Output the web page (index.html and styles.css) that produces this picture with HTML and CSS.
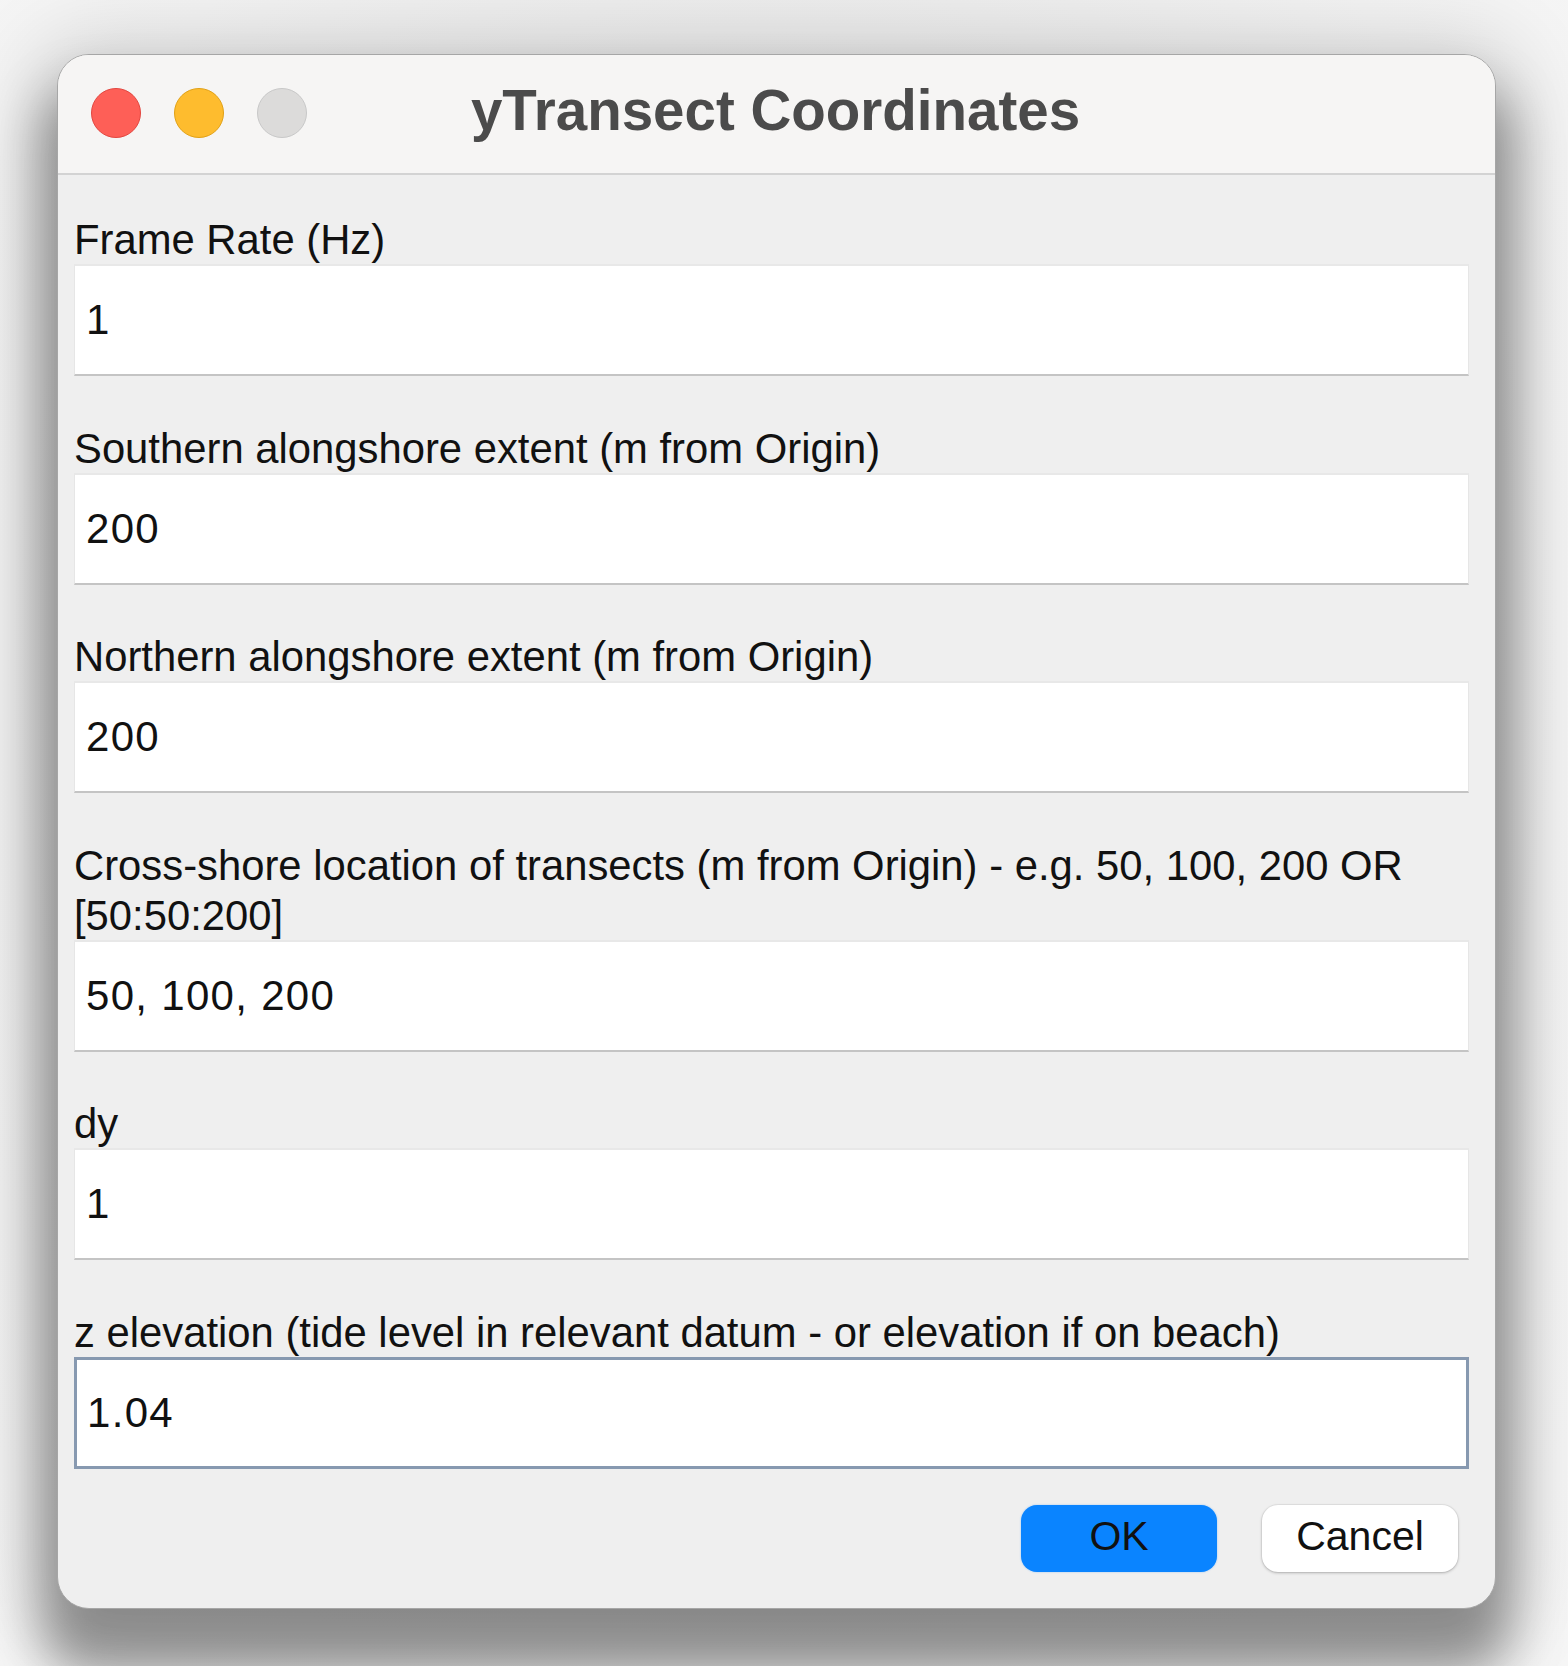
FILE: index.html
```html
<!DOCTYPE html>
<html lang="en">
<head>
<meta charset="utf-8">
<title>yTransect Coordinates</title>
<link rel="stylesheet" href="styles.css">
</head>
<body>
<div class="window">
  <div class="titlebar">
    <div class="lights">
      <span class="light red"></span>
      <span class="light yellow"></span>
      <span class="light gray"></span>
    </div>
    <div class="title">yTransect Coordinates</div>
  </div>
  <div class="content">
    <div class="field">
      <label class="label">Frame Rate (Hz)</label>
      <input class="input" type="text" value="1">
    </div>
    <div class="field">
      <label class="label">Southern alongshore extent (m from Origin)</label>
      <input class="input" type="text" value="200">
    </div>
    <div class="field">
      <label class="label">Northern alongshore extent (m from Origin)</label>
      <input class="input" type="text" value="200">
    </div>
    <div class="field">
      <label class="label">Cross-shore location of transects (m from Origin) - e.g. 50, 100, 200 OR [50:50:200]</label>
      <input class="input" type="text" value="50, 100, 200">
    </div>
    <div class="field">
      <label class="label">dy</label>
      <input class="input" type="text" value="1">
    </div>
    <div class="field">
      <label class="label">z elevation (tide level in relevant datum - or elevation if on beach)</label>
      <input class="input focused" type="text" value="1.04">
    </div>
    <div class="actions">
      <button class="btn primary">OK</button>
      <button class="btn secondary">Cancel</button>
    </div>
  </div>
</div>
</body>
</html>
```

FILE: styles.css
```css
* { box-sizing: border-box; }

html, body {
  margin: 0;
  height: 100%;
}

body {
  background: radial-gradient(ellipse at 50% 40%, #e2e2e2 0%, #f3f3f3 70%, #f6f6f6 100%);
  padding: 54px 0 0 57px;
  font-family: "Liberation Sans", Arial, Helvetica, sans-serif;
  overflow: hidden;
}

.window {
  width: 1439px;
  height: 1555px;
  border: 1px solid #a6a6a6;
  border-radius: 32px;
  background: #efefef;
  overflow: hidden;
  display: flex;
  flex-direction: column;
  box-shadow: 0 50px 50px 16px rgba(0, 0, 0, 0.36), 0 10px 80px 22px rgba(0, 0, 0, 0.15);
}

.titlebar {
  height: 120px;
  flex: none;
  background: #f6f5f4;
  border-bottom: 2px solid #d3d3d3;
  display: flex;
  align-items: center;
  position: relative;
}

.lights {
  display: flex;
  gap: 33px;
  padding-left: 33px;
  margin-top: -2px;
}

.light {
  width: 50px;
  height: 50px;
  border-radius: 50%;
  display: block;
}

.light.red { background: #fe5f57; border: 1px solid #e2463f; }
.light.yellow { background: #febc2e; border: 1px solid #e1a116; }
.light.gray { background: #dcdbda; border: 1px solid #c8c8c8; }

.title {
  position: absolute;
  left: 0;
  right: 0;
  top: 0;
  bottom: 0;
  display: flex;
  align-items: center;
  justify-content: center;
  font-weight: bold;
  font-size: 56.5px;
  color: #4b4b4b;
  padding-bottom: 8px;
  padding-right: 2px;
}

.content {
  padding: 37px 26px 0 16px;
  display: flex;
  flex-direction: column;
}

.field + .field {
  margin-top: 44.5px;
}

.field {
  display: flex;
  flex-direction: column;
}

.label {
  font-size: 41.8px;
  line-height: 50px;
  color: #111;
  padding-top: 3px;
  margin-bottom: -1px;
}

.input {
  height: 112px;
  width: 100%;
  background: #fff;
  border: none;
  border-top: 2px solid #e8e8e8;
  border-left: 1px solid #e6e6e6;
  border-right: 1px solid #e6e6e6;
  border-bottom: 2px solid #c4c4c4;
  font-family: "Liberation Sans", Arial, Helvetica, sans-serif;
  font-size: 42px;
  letter-spacing: 1.3px;
  color: #111;
  padding: 0 0 0 11px;
  outline: none;
  margin: 0;
}

.input.focused {
  border: 3px solid #8799b0;
  padding-left: 10px;
}

.actions {
  display: flex;
  justify-content: flex-end;
  gap: 45px;
  margin-top: 36px;
  padding-right: 11px;
}

.btn {
  width: 196px;
  height: 67px;
  border-radius: 16px;
  font-family: "Liberation Sans", Arial, Helvetica, sans-serif;
  font-size: 41px;
  color: #111;
  padding: 0 0 4px 0;
  margin: 0;
}

.btn.primary {
  background: #0a84ff;
  border: none;
  box-shadow: 0 0 2px rgba(10, 132, 255, 0.4);
}

.btn.secondary {
  background: #fff;
  border: none;
  box-shadow: 0 1px 3px rgba(0, 0, 0, 0.25), 0 0 0 1px rgba(0, 0, 0, 0.04);
}
```
